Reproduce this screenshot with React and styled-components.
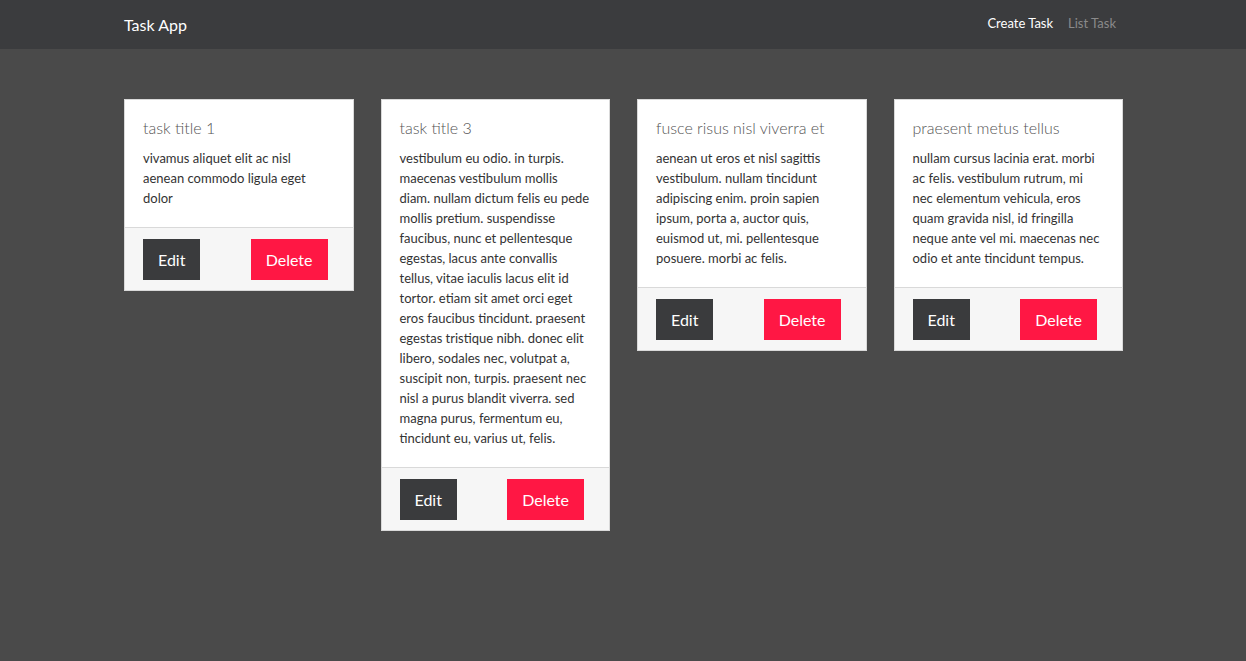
import React from "react";
import styled, { createGlobalStyle } from "styled-components";

const GlobalStyle = createGlobalStyle`
  * { box-sizing: border-box; }
  body {
    margin: 0;
    background: #4a4a4a;
    font-family: Lato, "Open Sans", sans-serif;
    color: #333;
  }
`;

const tasks = [
  {
    id: 1,
    title: "task title 1",
    body: "vivamus aliquet elit ac nisl aenean commodo ligula eget dolor",
  },
  {
    id: 3,
    title: "task title 3",
    body:
      "vestibulum eu odio. in turpis. maecenas vestibulum mollis diam. nullam dictum felis eu pede mollis pretium. suspendisse faucibus, nunc et pellentesque egestas, lacus ante convallis tellus, vitae iaculis lacus elit id tortor. etiam sit amet orci eget eros faucibus tincidunt. praesent egestas tristique nibh. donec elit libero, sodales nec, volutpat a, suscipit non, turpis. praesent nec nisl a purus blandit viverra. sed magna purus, fermentum eu, tincidunt eu, varius ut, felis.",
  },
  {
    id: 4,
    title: "fusce risus nisl viverra et",
    body:
      "aenean ut eros et nisl sagittis vestibulum. nullam tincidunt adipiscing enim. proin sapien ipsum, porta a, auctor quis, euismod ut, mi. pellentesque posuere. morbi ac felis.",
  },
  {
    id: 5,
    title: "praesent metus tellus",
    body:
      "nullam cursus lacinia erat. morbi ac felis. vestibulum rutrum, mi nec elementum vehicula, eros quam gravida nisl, id fringilla neque ante vel mi. maecenas nec odio et ante tincidunt tempus.",
  },
];

export default function App() {
  return (
    <>
      <GlobalStyle />
      <Navbar>
        <NavInner>
          <Brand>Task App</Brand>
          <NavLinks>
            <NavLink active>Create Task</NavLink>
            <NavLink>List Task</NavLink>
          </NavLinks>
        </NavInner>
      </Navbar>
      <Main>
        <Grid>
          {tasks.map((t) => (
            <Card key={t.id}>
              <CardBody>
                <Title>{t.title}</Title>
                <Text>{t.body}</Text>
              </CardBody>
              <CardFooter>
                <Button>Edit</Button>
                <Button danger>Delete</Button>
              </CardFooter>
            </Card>
          ))}
        </Grid>
      </Main>
    </>
  );
}

const Navbar = styled.nav`
  background: #3b3c3e;
  height: 49px;
`;

const NavInner = styled.div`
  width: 1000px;
  margin: 0 auto;
  height: 100%;
  display: flex;
  align-items: center;
  justify-content: space-between;
  padding: 0 7px 0 1px;
`;

const Brand = styled.a`
  color: #fff;
  font-size: 16px;
`;

const NavLinks = styled.div`
  display: flex;
  gap: 15px;
  margin-top: -3px;
`;

const NavLink = styled.a`
  font-size: 13px;
  color: ${(p) => (p.active ? "#fff" : "#8a8a8a")};
`;

const Main = styled.main`
  padding-top: 50px;
`;

const Grid = styled.div`
  width: 1000px;
  margin: 0 auto;
  padding-left: 1px;
  display: grid;
  grid-template-columns: repeat(4, 1fr);
  column-gap: 27px;
  align-items: start;
`;

const Card = styled.div`
  background: #fff;
  border: 1px solid #d9d9d9;
`;

const CardBody = styled.div`
  padding: 17px 18px 19px;
`;

const Title = styled.h3`
  margin: 0 0 9px;
  font-size: 16px;
  font-weight: 300;
  color: #555;
  line-height: 22px;
`;

const Text = styled.p`
  margin: 0;
  font-size: 13px;
  line-height: 20px;
  color: #333;
`;

const CardFooter = styled.div`
  background: #f6f6f6;
  border-top: 1px solid #d9d9d9;
  display: flex;
  justify-content: space-between;
  padding: 11px 25px 10px 18px;
`;

const Button = styled.button`
  border: none;
  height: 41px;
  padding: 0 15px;
  font-family: inherit;
  font-size: 16px;
  color: #fff;
  background: ${(p) => (p.danger ? "#ff1744" : "#3a3b3d")};
`;
